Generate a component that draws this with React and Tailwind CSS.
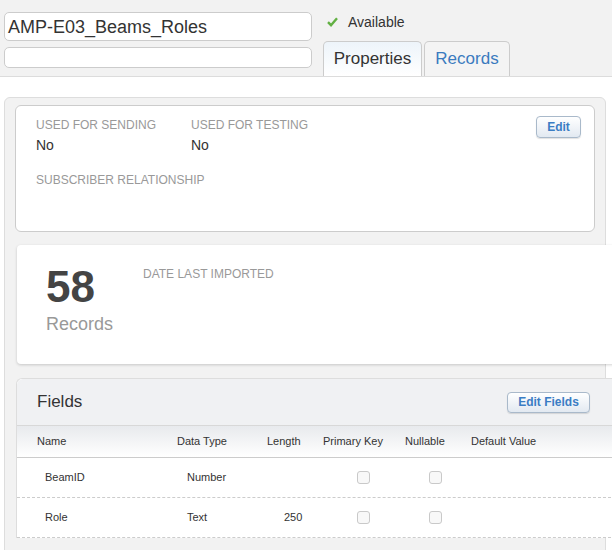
// Data extension detail view: header, summary panels and the fields table.
const FIELDS = [
  { name: 'BeamID', type: 'Number', length: '' },
  { name: 'Role', type: 'Text', length: '250' },
];

const COLS = 'grid grid-cols-[140px_90px_56px_82px_66px_1fr] items-center pl-[20px]';

function SmallButton({ children, className = '' }) {
  return (
    <button
      type="button"
      className={`flex items-center justify-center rounded-[4px] border border-[#a9b9ca] bg-linear-to-b from-white to-[#e2e9f1] text-[12px] font-bold text-[#3b7dc4] shadow-[0_1px_1px_rgba(0,0,0,0.12)] ${className}`}
    >
      {children}
    </button>
  );
}

function Checkbox() {
  return <span className="block h-[13px] w-[13px] rounded-[3px] border border-[#c9c9c9] bg-[#f8f8f8]" />;
}

function Label({ children, className = '' }) {
  return <p className={`text-[12px] uppercase leading-[14px] text-[#999] ${className}`}>{children}</p>;
}

export default function App() {
  return (
    <div className="h-[550px] w-[612px] overflow-hidden bg-white font-['Liberation_Sans',Arial,sans-serif] text-[#333]">
      {/* header */}
      <div className="flex h-[77px] border-b border-[#dcdcdc] bg-[#f2f2f2]">
        <div className="ml-[4px] mt-[12px] flex w-[308px] flex-col gap-[6px]">
          <div className="flex h-[29px] items-center rounded-[5px] border border-[#cccccc] bg-white px-[3px] text-[18px] leading-none">
            AMP-E03_Beams_Roles
          </div>
          <div className="h-[21px] rounded-[5px] border border-[#cccccc] bg-white" />
        </div>
        <div className="ml-[11px] flex flex-col">
          <div className="mt-[14px] flex h-[16px] items-center gap-[10px] pl-[4px] text-[14px]">
            <svg width="11" height="10" viewBox="0 0 11 10">
              <path d="M1 5.2 L4 8.2 L10 1.2" fill="none" stroke="#62b043" strokeWidth="2.4" />
            </svg>
            Available
          </div>
          <div className="mt-[11px] flex gap-[2px]">
            <div className="flex h-[35px] w-[99px] items-center justify-center rounded-t-[5px] border border-b-0 border-[#cccccc] bg-linear-to-b from-[#edf4fa] to-white text-[17px]">
              Properties
            </div>
            <div className="flex h-[35px] w-[86px] items-center justify-center rounded-t-[5px] border border-b-0 border-[#cccccc] bg-[#f4f4f4] text-[17px] text-[#3b7bbf]">
              Records
            </div>
          </div>
        </div>
      </div>

      {/* properties panel */}
      <div className="ml-[4px] mt-[20px] h-[600px] w-[602px] rounded-[6px] border border-[#dddddd] bg-[#f2f2f2] px-[10px] pt-[7px]">
        <div className="flex h-[127px] justify-between rounded-[6px] border border-[#cccccc] bg-white pl-[20px] pr-[13px] pt-[12px]">
          <div>
            <div className="flex">
              <div className="w-[155px]">
                <Label>Used for sending</Label>
                <p className="mt-[5px] text-[14px] leading-[16px]">No</p>
              </div>
              <div>
                <Label>Used for testing</Label>
                <p className="mt-[5px] text-[14px] leading-[16px]">No</p>
              </div>
            </div>
            <Label className="mt-[20px]">Subscriber relationship</Label>
          </div>
          <SmallButton className="-mt-[2px] h-[22px] w-[45px]">Edit</SmallButton>
        </div>

        <div className="ml-[2px] mt-[13px] flex h-[119px] w-[600px] rounded-l-[4px] bg-white pl-[29px] pt-[20px] shadow-[0_1px_3px_rgba(0,0,0,0.18)]">
          <div className="w-[97px]">
            <p className="text-[44px] font-bold leading-[44px] text-[#444]">58</p>
            <p className="mt-[5px] text-[18px] leading-[20px] text-[#999]">Records</p>
          </div>
          <Label className="mt-[2px]">Date last imported</Label>
        </div>

        <div className="ml-[1px] mt-[14px] w-[600px] rounded-tl-[6px] border-l border-t border-[#dddddd] bg-white">
          <div className="flex h-[47px] items-center justify-between rounded-tl-[6px] border-b border-[#d8d8d8] bg-[#f0f1f3] pl-[20px] pr-[26px]">
            <h2 className="text-[17px]">Fields</h2>
            <SmallButton className="h-[21px] w-[83px]">Edit Fields</SmallButton>
          </div>
          <div className={`${COLS} h-[32px] border-b border-[#cccccc] bg-linear-to-b from-[#e8eaed] to-white text-[11px]`}>
            <span>Name</span>
            <span>Data Type</span>
            <span>Length</span>
            <span>Primary Key</span>
            <span>Nullable</span>
            <span>Default Value</span>
          </div>
          {FIELDS.map((f) => (
            <div key={f.name} className={`${COLS} h-[40px] border-b border-dashed border-[#cccccc] text-[11px]`}>
              <span className="pl-[8px]">{f.name}</span>
              <span className="pl-[10px]">{f.type}</span>
              <span className="pl-[17px]">{f.length}</span>
              <span className="pl-[34px]">
                <Checkbox />
              </span>
              <span className="pl-[24px]">
                <Checkbox />
              </span>
              <span />
            </div>
          ))}
        </div>
      </div>
    </div>
  );
}
